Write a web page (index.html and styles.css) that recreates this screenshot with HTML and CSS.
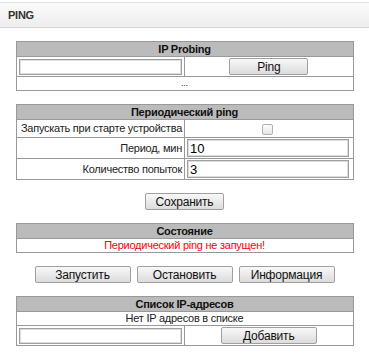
FILE: index.html
```html
<!DOCTYPE html>
<html lang="ru">
<head>
    <meta charset="UTF-8">
    <title>PING</title>
    <link rel="stylesheet" href="styles.css">
</head>
<body>
    <div class="page-title">PING</div>

    <div class="content">
        <!-- IP Probing -->
        <table class="grid">
            <tr><th colspan="2">IP Probing</th></tr>
            <tr class="row-form">
                <td class="half"><input type="text" class="field"></td>
                <td class="half center"><button class="btn btn-ping">Ping</button></td>
            </tr>
            <tr><td colspan="2" class="center small">...</td></tr>
        </table>

        <!-- Periodic ping -->
        <table class="grid">
            <tr><th colspan="2">Периодический ping</th></tr>
            <tr class="row-check">
                <td class="half label">Запускать при старте устройства</td>
                <td class="half center"><input type="checkbox" class="check"></td>
            </tr>
            <tr class="row-input">
                <td class="half label">Период, мин</td>
                <td class="half"><input type="text" class="field wide" value="10"></td>
            </tr>
            <tr class="row-input">
                <td class="half label">Количество попыток</td>
                <td class="half"><input type="text" class="field wide" value="3"></td>
            </tr>
        </table>

        <div class="actions">
            <button class="btn btn-save">Сохранить</button>
        </div>

        <!-- Status -->
        <table class="grid">
            <tr><th>Состояние</th></tr>
            <tr><td class="center status">Периодический ping не запущен!</td></tr>
        </table>

        <div class="actions">
            <button class="btn btn-wide">Запустить</button>
            <button class="btn btn-wide">Остановить</button>
            <button class="btn btn-wide">Информация</button>
        </div>

        <!-- IP list -->
        <table class="grid">
            <tr><th colspan="2">Список IP-адресов</th></tr>
            <tr><td colspan="2" class="center">Нет IP адресов в списке</td></tr>
            <tr class="row-form">
                <td class="half"><input type="text" class="field"></td>
                <td class="half center"><button class="btn btn-add">Добавить</button></td>
            </tr>
        </table>
    </div>
</body>
</html>
```

FILE: styles.css
```css
body, html {
    margin: 0;
    padding: 0;
    background: #fff;
    font-family: "Liberation Sans", Arial, sans-serif;
    font-size: 11px;
    letter-spacing: -0.25px;
    color: #222;
}
.page-title {
    margin-top: 2px;
    height: 24px;
    line-height: 24px;
    padding-left: 8px;
    font-weight: bold;
    color: #333;
    background: linear-gradient(#fbfbfb, #ededed);
    border-top: 1px solid #e2e2e2;
    border-bottom: 1px solid #d6d6d6;
}
.content {
    display: flex;
    flex-direction: column;
    align-items: center;
    gap: 13px;
    padding-top: 13px;
}
.grid {
    width: 338px;
    border-collapse: collapse;
    border: 1px solid #999;
    table-layout: fixed;
}
.grid th {
    background: #bbb;
    color: #111;
    font-weight: bold;
    line-height: 14px;
    padding: 0;
    border: 1px solid #999;
    text-align: center;
}
.grid td {
    border: 1px solid #999;
    padding: 0 2px;
    line-height: 13px;
    white-space: nowrap;
}
.half {
    width: 50%;
}
.center {
    text-align: center;
}
.label {
    text-align: right;
    padding-right: 1px;
}
.small {
    font-size: 9px;
}
.status {
    color: #f00;
}
.grid .row-check td {
    line-height: 17px;
}
.grid .row-form td {
    padding-top: 1px;
    padding-bottom: 1px;
}
.grid .row-input td {
    padding-top: 1px;
    padding-bottom: 1px;
}
.field {
    box-sizing: border-box;
    display: block;
    width: 163px;
    height: 16px;
    margin: 0;
    padding: 0 2px;
    border: 1px solid #a0a0a0;
    box-shadow: inset 0 0 0 1px #dcdcdc;
    font-family: "Liberation Sans", Arial, sans-serif;
    font-size: 13px;
    letter-spacing: 0;
    color: #000;
    outline: none;
}
.field.wide {
    width: 162px;
    height: 18px;
}
.check {
    appearance: none;
    box-sizing: border-box;
    width: 11px;
    height: 11px;
    margin: 0 0 0 -3px;
    vertical-align: middle;
    border: 1px solid #b0b0b0;
    border-radius: 2px;
    background: linear-gradient(#fdfdfd, #e6e6e6);
}
.btn {
    box-sizing: border-box;
    height: 17px;
    padding: 0;
    font-family: "Liberation Sans", Arial, sans-serif;
    font-size: 12px;
    letter-spacing: -0.2px;
    line-height: 14px;
    color: #111;
    background: linear-gradient(#f8f8f8, #dcdcdc);
    border: 1px solid #a0a0a0;
    border-radius: 2px;
    cursor: pointer;
}
.btn-ping {
    display: block;
    width: 79px;
    margin: 0 auto;
}
.btn-save {
    width: 79px;
}
.btn-add {
    display: block;
    width: 96px;
    margin: 0 auto;
}
.actions {
    display: flex;
    justify-content: center;
    gap: 6px;
}
.btn-wide {
    width: 96px;
}
```
